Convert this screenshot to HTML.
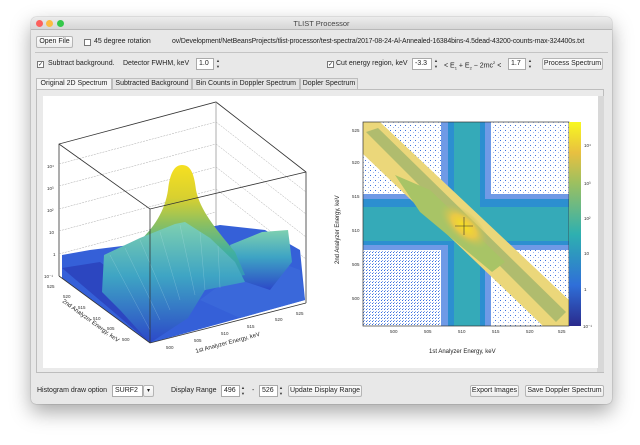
<!DOCTYPE html>
<html><head><style>
*{margin:0;padding:0;box-sizing:border-box}
body{width:640px;height:445px;background:#fff;position:relative;overflow:hidden;font-family:"Liberation Sans",sans-serif;font-size:7px;color:#222}
.win{position:absolute;left:31px;top:17px;width:581px;height:387px;background:#e8e8e8;border-radius:5px;box-shadow:0 8px 20px rgba(0,0,0,.35),0 0 1px rgba(0,0,0,.5);overflow:hidden}
.title{height:13px;background:linear-gradient(#ececec,#d6d6d6);border-bottom:1px solid #b8b8b8;text-align:center;font-size:7.5px;line-height:13px;color:#444}
.d{position:absolute;top:3px;width:7px;height:7px;border-radius:50%}
.a{position:absolute;white-space:nowrap}
.btn{position:absolute;background:linear-gradient(#fdfdfd,#ececec);border:1px solid #b5b5b5;border-radius:2px;height:12px;line-height:10px;text-align:center;white-space:nowrap}
.cb{position:absolute;width:7px;height:7px;border:1px solid #777;background:#fff;font-size:6px;line-height:6px;text-align:center}
.inp{position:absolute;height:12px;background:#fff;border:1px solid #aaa;line-height:10px;padding-left:2px}
.sp{position:absolute;width:6px;height:12px;font-size:4px;line-height:6px;text-align:center;color:#333}
.hr{position:absolute;left:4px;right:4px;height:1px;background:#c4c4c4}
.tab{position:absolute;top:61px;height:11px;line-height:10px;border:1px solid #bdbdbd;border-bottom:none;background:#e4e4e4;text-align:center;white-space:nowrap;overflow:hidden}
</style></head><body>
<div class="win">
<div class="title">TLIST Processor</div>
<div class="d" style="left:5px;background:#fc605c"></div>
<div class="d" style="left:15px;background:#fdbc40"></div>
<div class="d" style="left:26px;background:#34c84a"></div>

<div class="btn" style="left:5px;top:19px;width:37px">Open File</div>
<div class="cb" style="left:53px;top:22px"></div>
<div class="a" style="left:63px;top:21px">45 degree rotation</div>
<div class="a" style="left:141px;top:21px;font-size:6.9px;letter-spacing:-.1px">ov/Development/NetBeansProjects/tlist-processor/test-spectra/2017-08-24-Al-Annealed-16384bins-4.5dead-43200-counts-max-324400s.txt</div>
<div class="hr" style="top:35px"></div>

<div class="cb" style="left:6px;top:44px">✓</div>
<div class="a" style="left:17px;top:43px">Subtract background.</div>
<div class="a" style="left:92px;top:43px">Detector FWHM, keV</div>
<div class="inp" style="left:165px;top:41px;width:18px">1.0</div><div class="sp" style="left:184px;top:41px">▲<br>▼</div>
<div class="cb" style="left:296px;top:44px">✓</div>
<div class="a" style="left:305px;top:43px">Cut energy region, keV</div>
<div class="inp" style="left:381px;top:41px;width:20px">-3.3</div><div class="sp" style="left:402px;top:41px">▲<br>▼</div>
<div class="a" style="left:413px;top:43px">&lt; E<sub style="font-size:4px">1</sub> + E<sub style="font-size:4px">2</sub> − 2mc<sup style="font-size:4px">2</sup> &lt;</div>
<div class="inp" style="left:477px;top:41px;width:18px">1.7</div><div class="sp" style="left:496px;top:41px">▲<br>▼</div>
<div class="btn" style="left:511px;top:41px;width:61px">Process Spectrum</div>

<div class="tab" style="left:5px;width:76px;background:#f4f4f4;height:12px">Original 2D Spectrum</div>
<div class="tab" style="left:81px;width:80px">Subtracted Background</div>
<div class="tab" style="left:161px;width:108px">Bin Counts in Doppler Spectrum</div>
<div class="tab" style="left:269px;width:58px">Dopler Spectrum</div>
<div style="position:absolute;left:5px;top:72px;width:568px;height:284px;border:1px solid #bdbdbd;background:#eaeaea"></div>
<div style="position:absolute;left:566px;top:79px;width:7px;height:276px;background:#d8d8d8"></div>

<div class="a" style="left:6px;top:370px">Histogram draw option</div>
<div class="inp" style="left:81px;top:368px;width:31px">SURF2</div>
<div class="btn" style="left:112px;top:368px;width:11px;font-size:6px">▾</div>
<div class="a" style="left:140px;top:370px">Display Range</div>
<div class="inp" style="left:190px;top:368px;width:19px">496</div><div class="sp" style="left:209px;top:368px">▲<br>▼</div>
<div class="a" style="left:221px;top:370px">-</div>
<div class="inp" style="left:228px;top:368px;width:19px">526</div><div class="sp" style="left:247px;top:368px">▲<br>▼</div>
<div class="btn" style="left:257px;top:368px;width:74px">Update Display Range</div>
<div class="btn" style="left:439px;top:368px;width:49px">Export Images</div>
<div class="btn" style="left:494px;top:368px;width:79px">Save Doppler Spectrum</div>
</div>

<svg style="position:absolute;left:0;top:0" width="640" height="445" font-family="Liberation Sans,sans-serif">
<defs>
<linearGradient id="cbar" x1="0" y1="1" x2="0" y2="0"><stop offset="0" stop-color="#2a2a8c"/><stop offset=".2" stop-color="#2f6fd8"/><stop offset=".45" stop-color="#2eb0b0"/><stop offset=".7" stop-color="#9cc060"/><stop offset=".85" stop-color="#e8c040"/><stop offset="1" stop-color="#f8f820"/></linearGradient>
<radialGradient id="ctr"><stop offset="0" stop-color="#f8e020"/><stop offset=".5" stop-color="#e8c848"/><stop offset="1" stop-color="#b8c060" stop-opacity="0"/></radialGradient>
<linearGradient id="pk" x1="0" y1="0" x2="0" y2="1"><stop offset="0" stop-color="#f6e020"/><stop offset=".28" stop-color="#d8d030"/><stop offset=".5" stop-color="#8cc060"/><stop offset=".75" stop-color="#40b0a0"/><stop offset="1" stop-color="#3090c0"/></linearGradient>
<linearGradient id="rg" x1="0" y1="0" x2="0" y2="1"><stop offset="0" stop-color="#7ed0b0"/><stop offset=".45" stop-color="#3ea4c4"/><stop offset="1" stop-color="#2c48c8"/></linearGradient>
<pattern id="dots" width="5" height="5" patternUnits="userSpaceOnUse"><rect width="5" height="5" fill="#fff"/><rect x="0" y="0" width="1" height="1" fill="#3a70e0"/><rect x="3" y="2" width="1" height="1" fill="#3a70e0" opacity=".5"/></pattern>
<pattern id="dots2" width="3" height="3" patternUnits="userSpaceOnUse"><rect width="3" height="3" fill="#fff"/><rect width="1" height="1" fill="#3a70e0"/><rect x="1" y="2" width="1" height="1" fill="#3a70e0" opacity=".6"/></pattern>
</defs>
<rect x="43" y="96" width="555" height="272" fill="#fff"/>
<!-- 3D plot -->
<g stroke="#333" stroke-width=".8" fill="none">
<polyline points="59,276 59,144 216,102 306,172 306,303"/>
<line x1="216" y1="102" x2="216" y2="240" stroke="#999"/>
</g>
<g stroke="#aaa" stroke-width=".5" stroke-dasharray="2,1">
<line x1="59" y1="164" x2="216" y2="122"/><line x1="59" y1="186" x2="216" y2="144"/><line x1="59" y1="209" x2="216" y2="167"/><line x1="59" y1="231" x2="216" y2="189"/><line x1="59" y1="254" x2="216" y2="212"/>
<line x1="216" y1="122" x2="306" y2="192"/><line x1="216" y1="144" x2="306" y2="214"/><line x1="216" y1="167" x2="306" y2="237"/><line x1="216" y1="189" x2="306" y2="259"/>
</g>
<polygon points="62,255 90,250 130,245 170,235 220,225 265,230 300,250 305,300 150,343 62,278" fill="#3560d8"/>
<polygon points="62,268 100,262 150,300 150,343" fill="#2c46c0"/>
<polygon points="200,300 260,255 300,270 305,300 240,318" fill="#3a68da"/>
<path d="M230,245 L262,232 L288,230 L292,262 L270,290 L240,280Z" fill="url(#rg)"/>
<path d="M135,245 C155,228 165,210 168,190 C170,172 175,165 182,165 C190,165 194,172 196,190 C200,210 215,228 235,252 L245,275 L200,282 L150,270Z" fill="url(#pk)"/>
<path d="M102,292 L104,255 L140,238 L175,224 L185,222 L210,238 L235,262 L245,282 L205,290 L188,318 L150,343 L120,310Z" fill="url(#rg)"/>
<g stroke="#bfe6ee" stroke-width=".3" opacity=".6">
<line x1="110" y1="255" x2="150" y2="330"/><line x1="125" y1="248" x2="160" y2="320"/><line x1="140" y1="240" x2="170" y2="310"/><line x1="160" y1="232" x2="180" y2="300"/><line x1="180" y1="225" x2="195" y2="295"/><line x1="200" y1="232" x2="205" y2="290"/><line x1="218" y1="246" x2="220" y2="288"/>
</g>
<g stroke="#333" stroke-width=".8" fill="none"><polyline points="59,144 150,209 306,172"/><line x1="150" y1="209" x2="150" y2="343"/><polyline points="59,276 150,343 306,303"/></g>
<g font-size="4.5" fill="#333">
<text x="47" y="168">10⁴</text><text x="47" y="190">10³</text><text x="47" y="212">10²</text><text x="49" y="234">10</text><text x="53" y="256">1</text><text x="44" y="278">10⁻¹</text>
<text x="47" y="288">525</text><text x="63" y="298">520</text><text x="78" y="309">515</text><text x="93" y="320">510</text><text x="107" y="330">505</text><text x="122" y="341">500</text>
<text x="166" y="349">500</text><text x="194" y="342">505</text><text x="221" y="335">510</text><text x="247" y="328">515</text><text x="275" y="321">520</text><text x="296" y="315">525</text>
</g>
<text x="62" y="302" font-size="6" fill="#222" transform="rotate(36 62 302)">2nd Analyzer Energy, keV</text>
<text x="196" y="353" font-size="6" fill="#222" transform="rotate(-15 196 353)">1st Analyzer Energy, keV</text>

<!-- 2D plot -->
<clipPath id="c2"><rect x="363" y="122" width="206" height="204"/></clipPath>
<g clip-path="url(#c2)">
<rect x="363" y="122" width="206" height="204" fill="url(#dots)"/>
<rect x="363" y="250" width="80" height="76" fill="url(#dots2)"/>
<rect x="441" y="122" width="50" height="204" fill="#6f9ae6"/>
<rect x="363" y="194" width="206" height="56" fill="#6f9ae6"/>
<rect x="448" y="122" width="37" height="204" fill="#2c8fd0"/>
<rect x="363" y="199" width="206" height="46" fill="#2c8fd0"/>
<rect x="454" y="122" width="26" height="204" fill="#35aab8"/>
<rect x="363" y="207" width="206" height="34" fill="#35aab8"/>
<polygon points="363,122 380,122 569,300 569,326 543,326 363,154" fill="#ebd77a"/>
<polygon points="366,132 378,128 566,312 556,322" fill="#b0bc6e"/>
<polygon points="395,175 430,190 505,262 492,272 420,212" fill="#a8c466"/>
<ellipse cx="464" cy="226" rx="30" ry="14" transform="rotate(42 464 226)" fill="url(#ctr)"/>
</g>
<rect x="363" y="122" width="206" height="204" fill="none" stroke="#333" stroke-width=".7"/>
<line x1="455" y1="226" x2="473" y2="226" stroke="#333" stroke-width=".6"/><line x1="464" y1="217" x2="464" y2="235" stroke="#333" stroke-width=".6"/>
<rect x="569" y="122" width="12" height="204" fill="url(#cbar)"/>
<g font-size="4.5" fill="#333">
<text x="584" y="147">10⁴</text><text x="584" y="185">10³</text><text x="584" y="220">10²</text><text x="584" y="255">10</text><text x="584" y="291">1</text><text x="583" y="328">10⁻¹</text>
<text x="352" y="132">525</text><text x="352" y="164">520</text><text x="352" y="198">515</text><text x="352" y="232">510</text><text x="352" y="266">505</text><text x="352" y="300">500</text>
<text x="390" y="333">500</text><text x="424" y="333">505</text><text x="458" y="333">510</text><text x="492" y="333">515</text><text x="526" y="333">520</text><text x="558" y="333">525</text>
</g>
<text x="429" y="353" font-size="6" fill="#222">1st Analyzer Energy, keV</text>
<text x="339" y="264" font-size="6" fill="#222" transform="rotate(-90 339 264)">2nd Analyzer Energy, keV</text>
</svg>
</body></html>
